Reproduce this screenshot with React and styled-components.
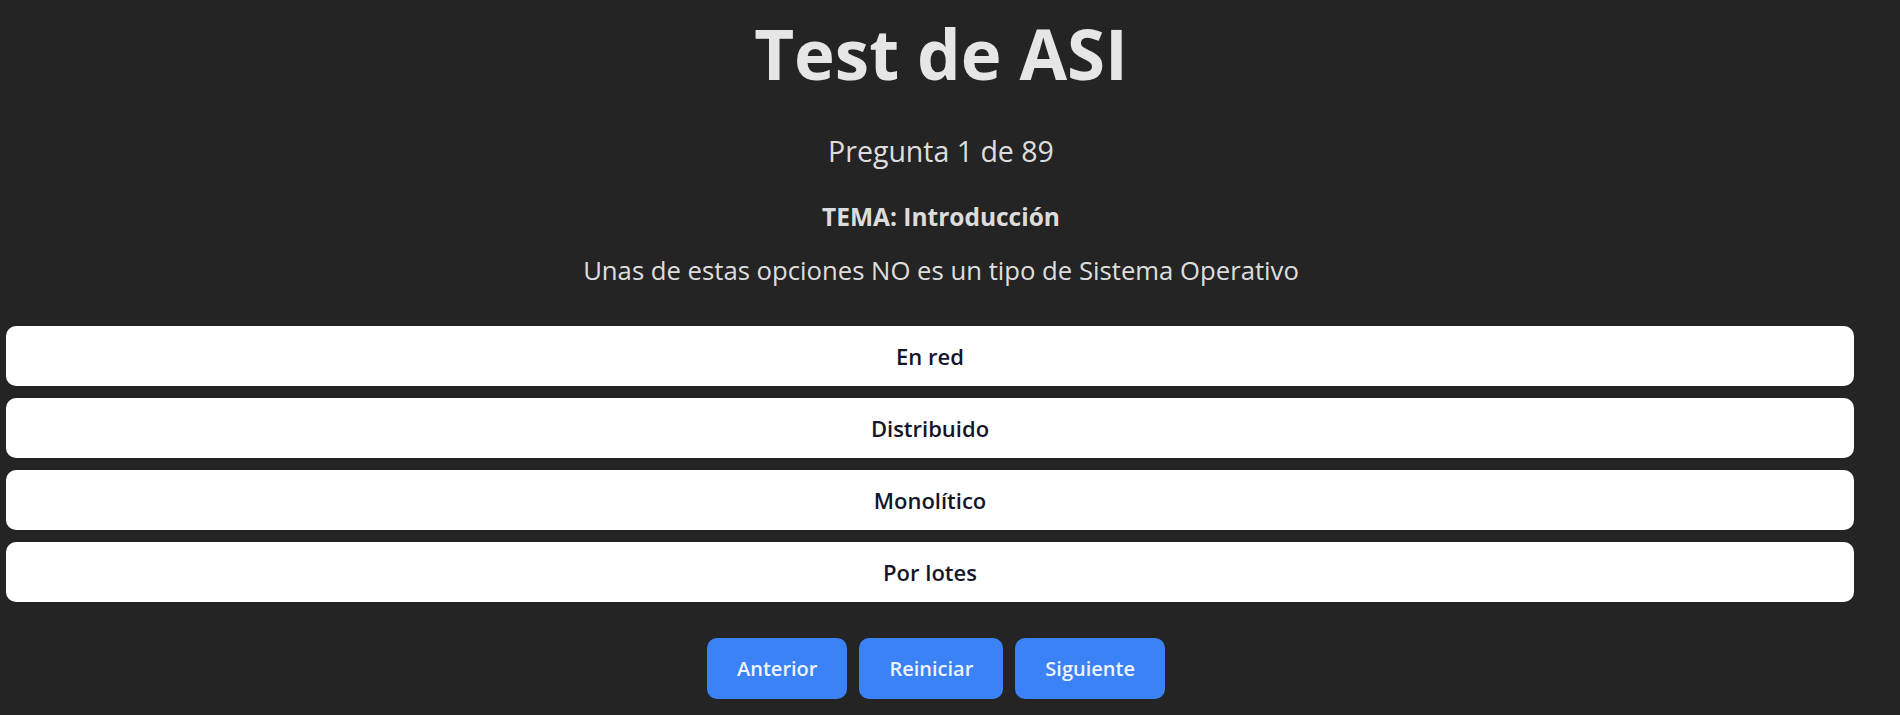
import React from "react";
import styled, { createGlobalStyle } from "styled-components";

const GlobalStyle = createGlobalStyle`
  html, body {
    margin: 0;
    padding: 0;
    background: #242424;
  }

  body {
    font-family: "Open Sans", "Noto Sans", sans-serif;
    color: rgba(255, 255, 255, 0.87);
  }
`;

const QuizWrapper = styled.div`
  display: flex;
  flex-direction: column;
  align-items: center;
  padding-right: 18px;
`;

const Title = styled.h1`
  margin: 8px 0 0;
  font-size: 69px;
  font-weight: 700;
  line-height: 90px;
  color: #e6e6e6;
`;

const Counter = styled.p`
  margin: 35px 0 0;
  font-size: 28.5px;
  line-height: 36px;
`;

const Topic = styled.h3`
  margin: 32px 0 0;
  font-size: 24.5px;
  font-weight: 700;
  line-height: 32px;
`;

const Question = styled.p`
  margin: 22px 0 0;
  font-size: 25.7px;
  line-height: 32px;
`;

const OptionList = styled.div`
  align-self: stretch;
  display: flex;
  flex-direction: column;
  gap: 12px;
  margin: 39px 28px 0 6px;
`;

const OptionButton = styled.button`
  height: 60px;
  width: 100%;
  border: none;
  border-radius: 10px;
  background: #ffffff;
  color: #141529;
  font-family: inherit;
  font-size: 22px;
  font-weight: 600;
  cursor: pointer;
`;

const Controls = styled.div`
  display: flex;
  gap: 12px;
  margin: 36px 10px 0 0;
`;

const NavButton = styled.button`
  height: 61px;
  padding: 0 30px;
  border: none;
  border-radius: 10px;
  background: #3b82f6;
  color: #eef3ff;
  font-family: inherit;
  font-size: 20px;
  font-weight: 600;
  cursor: pointer;
`;

const options = ["En red", "Distribuido", "Monolítico", "Por lotes"];

const App = () => {
  return (
    <>
      <GlobalStyle />
      <QuizWrapper>
        <Title>Test de ASI</Title>
        <Counter>Pregunta 1 de 89</Counter>
        <Topic>TEMA: Introducción</Topic>
        <Question>Unas de estas opciones NO es un tipo de Sistema Operativo</Question>
        <OptionList>
          {options.map((opt) => (
            <OptionButton key={opt}>{opt}</OptionButton>
          ))}
        </OptionList>
        <Controls>
          <NavButton>Anterior</NavButton>
          <NavButton>Reiniciar</NavButton>
          <NavButton>Siguiente</NavButton>
        </Controls>
      </QuizWrapper>
    </>
  );
};

export default App;
